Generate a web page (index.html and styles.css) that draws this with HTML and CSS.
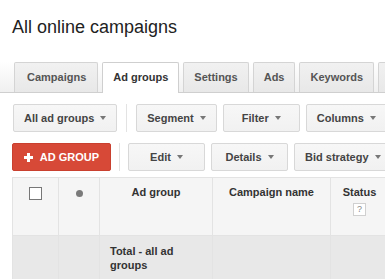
FILE: index.html
```html
<!DOCTYPE html>
<html>
<head>
<meta charset="utf-8">
<link rel="stylesheet" href="styles.css">
</head>
<body>
<h1 class="title">All online campaigns</h1>
<div class="tabstrip">
  <div class="tab">Campaigns</div>
  <div class="tab active">Ad groups</div>
  <div class="tab">Settings</div>
  <div class="tab">Ads</div>
  <div class="tab">Keywords</div>
  <div class="tab more"></div>
</div>
<div class="toolbar">
  <div class="btn">All ad groups<span class="caret"></span></div>
  <div class="sep"></div>
  <div class="btn">Segment<span class="caret"></span></div>
  <div class="btn">Filter<span class="caret"></span></div>
  <div class="btn">Columns<span class="caret"></span></div>
</div>
<div class="toolbar second">
  <div class="btn primary"><span class="plus"></span>AD GROUP</div>
  <div class="sep"></div>
  <div class="btn">Edit<span class="caret"></span></div>
  <div class="btn">Details<span class="caret"></span></div>
  <div class="btn">Bid strategy<span class="caret"></span></div>
</div>
<div class="grid">
  <div class="cell head"><span class="checkbox"></span></div>
  <div class="cell head"><span class="dot"></span></div>
  <div class="cell head center">Ad group</div>
  <div class="cell head center">Campaign name</div>
  <div class="cell head center">Status<span class="help">?</span></div>
  <div class="cell total"></div>
  <div class="cell total"></div>
  <div class="cell total label">Total - all ad groups</div>
  <div class="cell total"></div>
  <div class="cell total"></div>
</div>
</body>
</html>
```
FILE: styles.css
```css
html, body {
  margin: 0;
  padding: 0;
  background: #fff;
  overflow: hidden;
  width: 385px;
  height: 279px;
}
body {
  font-family: "Liberation Sans", Arial, sans-serif;
  color: #333;
}
.title {
  margin: 0;
  padding: 15px 12px 0;
  font-size: 18px;
  font-weight: normal;
  line-height: 24px;
  color: #222;
}
.tabstrip {
  margin-top: 23px;
  height: 30px;
  display: flex;
  gap: 4px;
  padding-left: 14px;
  border-bottom: 1px solid #cfcfcf;
  background: linear-gradient(#ffffff, #f0f0f0);
  white-space: nowrap;
}
.tab {
  flex: none;
  box-sizing: border-box;
  height: 30px;
  padding: 0 10px;
  line-height: 29px;
  font-size: 11px;
  font-weight: bold;
  color: #555;
  background: linear-gradient(#f1f1f1, #e8e8e8);
  border: 1px solid #d4d4d4;
  border-bottom: none;
  border-radius: 2px 2px 0 0;
}
.tab:first-child {
  padding: 0 11px 0 12px;
}
.tab.active {
  background: #fff;
  color: #333;
  height: 31px;
  border-color: #cfcfcf;
}
.tab.more {
  width: 40px;
}
.toolbar {
  display: flex;
  gap: 6px;
  padding-left: 13px;
  margin-top: 11px;
  height: 28px;
  white-space: nowrap;
}
.toolbar.second {
  padding-left: 12px;
}
.btn {
  flex: none;
  box-sizing: border-box;
  min-width: 77px;
  height: 28px;
  padding: 0 10px;
  display: flex;
  align-items: center;
  justify-content: center;
  font-size: 11px;
  font-weight: bold;
  color: #444;
  background: linear-gradient(#f7f7f7, #f1f1f1);
  border: 1px solid #d8d8d8;
  border-radius: 2px;
}
.btn.primary {
  width: 99px;
  color: #fff;
  background: #d74937;
  border-color: #c9402f;
}
.caret {
  width: 0;
  height: 0;
  margin-left: 6px;
  border-left: 3.5px solid transparent;
  border-right: 3.5px solid transparent;
  border-top: 4px solid #777;
}
.plus {
  position: relative;
  width: 9px;
  height: 9px;
  margin-right: 7px;
}
.plus::before, .plus::after {
  content: "";
  position: absolute;
  background: #fff;
}
.plus::before {
  left: 3px;
  top: 0;
  width: 3px;
  height: 9px;
}
.plus::after {
  left: 0;
  top: 3px;
  width: 9px;
  height: 3px;
}
.sep {
  flex: none;
  width: 1px;
  height: 28px;
  margin: 0 2px;
  background: #e3e3e3;
}
.toolbar:not(.second) .sep {
  margin: 0 3px;
}
.grid {
  margin: 6px 0 0 12px;
  display: grid;
  grid-template-columns: 46px 41px 113px 118px 58px;
  grid-template-rows: 58px 44px;
  border-top: 1px solid #e3e3e3;
  border-left: 1px solid #e3e3e3;
  width: 400px;
}
.cell {
  border-right: 1px solid #e3e3e3;
  border-bottom: 1px solid #e3e3e3;
  font-size: 11px;
  font-weight: bold;
  line-height: 14px;
  color: #333;
}
.head {
  background: #f5f5f5;
  padding-top: 7px;
  display: flex;
  flex-direction: column;
  align-items: center;
}
.total {
  background: #e8e8e8;
}
.label {
  padding: 8px 11px 0 10px;
}
.checkbox {
  margin-top: 2px;
  width: 11px;
  height: 11px;
  border: 1px solid #777;
  background: #fff;
}
.dot {
  margin-top: 5px;
  width: 7px;
  height: 7px;
  border-radius: 50%;
  background: #7a7a7a;
}
.help {
  margin-top: 4px;
  width: 11px;
  height: 11px;
  border: 1px solid #d0d0d0;
  background: #fff;
  font-size: 9px;
  font-weight: normal;
  line-height: 11px;
  text-align: center;
  color: #888;
}
```
